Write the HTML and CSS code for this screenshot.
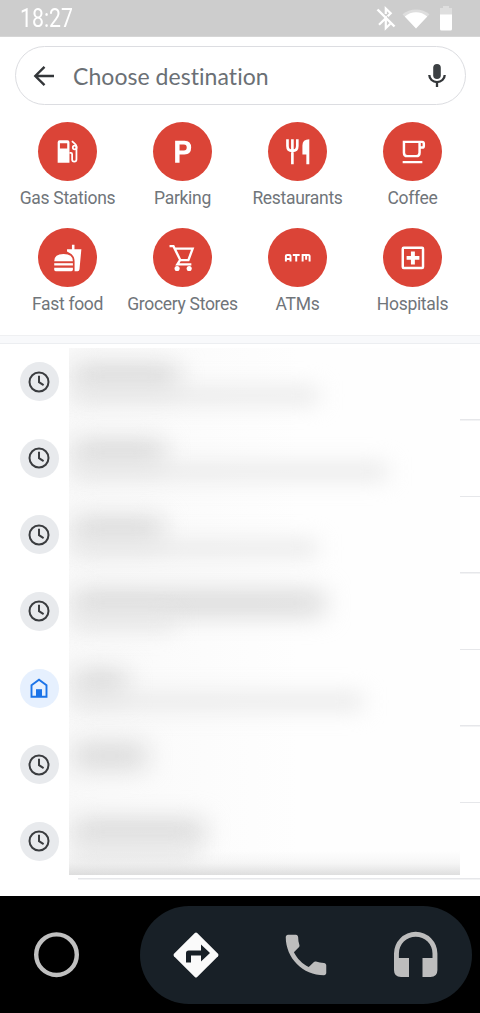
FILE: index.html
```html
<!DOCTYPE html>
<html lang="en">
<head>
<meta charset="utf-8">
<title>Choose destination</title>
<link rel="stylesheet" href="styles.css">
</head>
<body>
<div class="screen">
  <header class="status">
    <span class="time">18:27</span>
    <div class="status-icons">
      <svg class="bt" width="20" height="25" viewBox="0 0 20 25"><path d="M1.500 3.500 18.500 20.500" stroke="#fff" stroke-width="2.400"/><path d="M9.800 8V2.600l4.900 4.700-3 3M3 18.800l6.800-6.600v10l4.500-4.500" fill="none" stroke="#fff" stroke-width="2.200"/></svg>
      <svg class="wifi" width="28" height="20" viewBox="0 0 28 20"><path d="M14 19.500.5 5.200C8-1.200 20-1.200 27.500 5.200Z" fill="#dedede"/><path d="M14 19.500 2.800 7.600C9 1.700 19 1.700 25.200 7.600Z" fill="#fff"/></svg>
      <svg class="battery" width="14" height="25" viewBox="0 0 14 25"><path d="M4 0h6v2H13v7H1V2h3Z" fill="#dedede"/><path d="M1 8.500h12V23q0 1.500-1.500 1.500h-9Q1 24.500 1 23Z" fill="#fff"/></svg>
    </div>
  </header>

  <div class="search">
    <svg width="22" height="22" viewBox="0 0 22 22" fill="none" stroke="#333639" stroke-width="2.400"><path d="M21 11H3M11.500 1.800 2.300 11l9.200 9.200"/></svg>
    <span class="placeholder">Choose destination</span>
    <svg width="18" height="25" viewBox="0 0 18 25"><rect x="5.200" y="1" width="7.600" height="15" rx="3.800" fill="#3c4043"/><path d="M1.300 12a7.700 7.100 0 0 0 15.400 0M9 19v5" fill="none" stroke="#333639" stroke-width="2.300"/></svg>
  </div>

  <nav class="categories">
    <div class="category"><div class="disc"><svg viewBox="0 0 60 60"><path fill-rule="evenodd" d="M22 18.500h8q2 0 2 2V41.500H20v-21q0-2 2-2Zm.3 3v5.500h7.400v-5.500Z" fill="#fff"/><path d="M32 31.500h1.500q1.200 0 1.200 1.200v5.500q0 2.100 2.200 2.100t2.200-2.100V25q0-1.500-1.200-2.500L34.500 19.500" fill="none" stroke="#fff" stroke-width="1.800"/><circle cx="37.300" cy="26" r="1.900" fill="none" stroke="#fff" stroke-width="1.800"/></svg></div><span class="label">Gas Stations</span></div>
    <div class="category"><div class="disc"><svg viewBox="0 0 60 60"><path fill-rule="evenodd" d="M22.500 19H32q6.800 0 6.800 7T32 33h-5v8.500h-4.500ZM27 23v6h4.500q2.800 0 2.800-3t-2.800-3Z" fill="#fff"/></svg></div><span class="label">Parking</span></div>
    <div class="category"><div class="disc"><svg viewBox="0 0 60 60"><path d="M19.800 17.500v7q0 5 5 5t5-5v-7M24.800 17.500V43" fill="none" stroke="#fff" stroke-width="2.700"/><path d="M42 17.500V43h-3V33h-4v-9q0-6.500 7-6.500Z" fill="#fff"/></svg></div><span class="label">Restaurants</span></div>
    <div class="category"><div class="disc"><svg viewBox="0 0 60 60"><path d="M21.300 20.200h15.900v11q0 3.500-3.500 3.500h-8.900q-3.500 0-3.500-3.500ZM37.200 20.200h2.600q1.700 0 1.700 1.700v2.400q0 1.700-1.700 1.700h-2.600M20 40.800h20" fill="none" stroke="#fff" stroke-width="2.500"/></svg></div><span class="label">Coffee</span></div>
    <div class="category"><div class="disc"><svg viewBox="0 0 60 60"><g fill="#fff"><path d="M16.500 33.800q0-7.300 9.500-7.300t9.500 7.300Z"/><rect x="16.500" y="35.800" width="19" height="2.300"/><path d="M16.500 40.500h19v1.800q0 1.600-1.600 1.600H18q-1.500 0-1.500-1.600Z"/><path d="M34.500 17h2.600v4.500h7L42.200 42q-.2 1.900-2 1.900h-3V34q0-6-5-8.500L29.500 24v-2.500h5Z"/></g></svg></div><span class="label">Fast food</span></div>
    <div class="category"><div class="disc"><svg viewBox="0 0 60 60"><path d="M16.800 18.500h4l7 14.200h8.200L40.300 21H22M27.800 32.200l-3 4.800H39" fill="none" stroke="#fff" stroke-width="2.400"/><circle cx="24.500" cy="41.200" r="2.600" fill="#fff"/><circle cx="36.800" cy="41.200" r="2.600" fill="#fff"/></svg></div><span class="label">Grocery Stores</span></div>
    <div class="category"><div class="disc"><svg viewBox="0 0 60 60"><path d="M18.200 34v-5.400q0-1.200 1.200-1.200h2.300q1.200 0 1.200 1.200V34M18.200 31.500h4.700M25.200 27.400h7M28.700 27.400V34M35.200 34v-6.600h5.900q1.200 0 1.200 1.200V34M38.800 27.400v4.800" fill="none" stroke="#fff" stroke-width="2"/></svg></div><span class="label">ATMs</span></div>
    <div class="category"><div class="disc"><svg viewBox="0 0 60 60"><rect x="20.100" y="20.100" width="20.600" height="20.600" rx="1" fill="none" stroke="#fff" stroke-width="2.500"/><path d="M30.400 24v13M24 30.400h13" stroke="#fff" stroke-width="4"/></svg></div><span class="label">Hospitals</span></div>
  </nav>

  <div class="divider"></div>

  <main class="history">
    <svg class="defs" width="0" height="0"><symbol id="clock" viewBox="0 0 22 22"><circle cx="11" cy="11" r="9.500" fill="none" stroke="#3a3c3f" stroke-width="2"/><path d="M11 4.700v6.500l4.600 2.900" fill="none" stroke="#3a3c3f" stroke-width="2"/></symbol></svg>
    <div class="entry"><div class="badge"><svg width="22" height="22"><use href="#clock"/></svg></div></div>
    <div class="entry"><div class="badge"><svg width="22" height="22"><use href="#clock"/></svg></div></div>
    <div class="entry"><div class="badge"><svg width="22" height="22"><use href="#clock"/></svg></div></div>
    <div class="entry"><div class="badge"><svg width="22" height="22"><use href="#clock"/></svg></div></div>
    <div class="entry"><div class="badge home"><svg width="22" height="22" viewBox="0 0 22 22"><path d="M3.500 8.200 11 2.700l7.500 5.500v11.500h-15Z" fill="none" stroke="#1a73e8" stroke-width="1.900"/><path d="M8 12.200h6v7.500H8Z" fill="#1a73e8"/></svg></div></div>
    <div class="entry"><div class="badge"><svg width="22" height="22"><use href="#clock"/></svg></div></div>
    <div class="entry"><div class="badge"><svg width="22" height="22"><use href="#clock"/></svg></div></div>
    <div class="veil">
      <div class="veil-row"><i class="title" style="width:104px"></i><i class="sub" style="width:244px"></i></div>
      <div class="veil-row"><i class="title" style="width:90px"></i><i class="sub" style="width:313px"></i></div>
      <div class="veil-row"><i class="title" style="width:88px"></i><i class="sub" style="width:243px"></i></div>
      <div class="veil-row high"><i class="title" style="width:250px"></i><i class="sub" style="width:100px"></i></div>
      <div class="veil-row"><i class="title" style="width:52px"></i><i class="sub" style="width:288px"></i></div>
      <div class="veil-row high"><i class="title" style="width:72px"></i></div>
      <div class="veil-row high"><i class="title" style="width:130px"></i><i class="sub" style="width:120px"></i></div>
    </div>
  </main>

  <footer class="dock">
    <svg class="home-button" width="46" height="46" viewBox="0 0 46 46"><circle cx="22.500" cy="22.700" r="20.300" fill="none" stroke="#c0c0c0" stroke-width="4.400"/></svg>
    <div class="pill">
      <svg width="46" height="46" viewBox="0 0 46 46"><path d="M21.800 1q1.200-1 2.400 0L45 21.800q1 1.200 0 2.400L24.200 45q-1.200 1-2.400 0L1 24.200q-1-1.200 0-2.400Z" fill="#fafafa"/><path d="M13 30.500v-9.300q0-2.700 2.700-2.700H28v-6l9 8.500-9 8.500v-6H18v7Z" fill="#182027"/></svg>
      <svg class="phone" width="54" height="54" viewBox="0 0 24 24"><path d="M6.620 10.790c1.440 2.830 3.760 5.140 6.590 6.590l2.200-2.200c.27-.27.670-.36 1.020-.24 1.120.37 2.330.57 3.570.57.550 0 1 .45 1 1V20c0 .55-.45 1-1 1-9.390 0-17-7.610-17-17 0-.55.450-1 1-1h3.500c.550 0 1 .45 1 1 0 1.250.2 2.450.57 3.570.11.350.03.740-.25 1.020l-2.200 2.200z" fill="#bdbdbd"/></svg>
      <svg class="phones" width="46" height="47" viewBox="0 0 46 47"><path d="M1 22.500a21.700 21.700 0 0 1 43.400 0V39q0 7-7 7H29.500V27h10v-4.500a16.800 16.800 0 0 0-33.600 0V27H16v19H8q-7 0-7-7Z" fill="#bdbdbd"/></svg>
    </div>
  </footer>
</div>
</body>
</html>
```
FILE: styles.css
```css
* { box-sizing: border-box; }
body { margin: 0; background: #fff; font-family: Roboto, "Liberation Sans", sans-serif; }
svg { display: block; flex: none; }

.screen { width: 480px; height: 1013px; display: flex; flex-direction: column; overflow: hidden; }

.status { height: 37px; flex: none; background: #cdcdcd; display: flex; justify-content: space-between; padding: 0 27px 0 20px; border-bottom: 1px solid #d6d6d6; }
.time { color: #fff; font-size: 25px; line-height: 37px; transform: scaleX(.85); transform-origin: left; }
.status-icons { display: flex; align-items: flex-start; padding-top: 6px; }
.wifi { margin: 3px 0 0 6px; }
.battery { margin-left: 9px; }

.search { height: 59px; flex: none; margin: 9px 14.500px 0; border: 1.500px solid #dcdde1; border-radius: 30px; display: flex; align-items: center; padding: 0 19px 0 17.500px; }
.placeholder { flex: 1; margin-left: 18px; font-family: Lato, Roboto, sans-serif; font-size: 23px; letter-spacing: .05px; color: #6b7075; white-space: nowrap; }

.categories { flex: none; height: 230px; padding: 17px 10px 0 10px; display: grid; grid-template-columns: repeat(4, 1fr); grid-template-rows: 106px 106px; }
.category { display: flex; flex-direction: column; align-items: center; }
.disc { width: 59px; height: 59px; border-radius: 50%; background: #db4437; }
.disc svg { width: 59px; height: 59px; }
.label { margin-top: 6px; font-size: 17.500px; line-height: 23px; letter-spacing: -.3px; color: #70757a; white-space: nowrap; }

.divider { flex: none; height: 9px; background: #f8f9fb; border-top: 1px solid #eff0f2; border-bottom: 1px solid #eceef1; }

.history { position: relative; flex: none; height: 552px; padding-bottom: 16px; display: grid; grid-template-rows: repeat(7, 1fr); }
.defs { position: absolute; }
.entry { display: flex; align-items: center; padding: 0 0 1px 19.500px; background: linear-gradient(#e6e7ea, #e6e7ea) 78px 100% / 402px 1.500px no-repeat; }
.badge { width: 39px; height: 39px; border-radius: 50%; background: #e8eaed; display: flex; align-items: center; justify-content: center; }
.badge.home { background: #e6f0fe; }

.veil { position: absolute; left: 69px; top: 4px; width: 391px; height: 527px; overflow: hidden; background: linear-gradient(90deg, #f9f9f9, #fbfbfb 90px, #fefefe 230px); }
.veil::after { content: ""; position: absolute; inset: auto 0 0; height: 24px; background: linear-gradient(rgba(215,215,215,0), rgba(215,215,215,.2) 50%, rgba(212,212,212,.75)); }
.veil-row { height: 76.400px; padding: 18px 0 0 5px; display: flex; flex-direction: column; }
.veil-row.high { padding-top: 15px; }
.title { height: 22px; background: #d4d4d4; filter: blur(13px); }
.sub { height: 15px; background: #e6e6e6; filter: blur(11px); }

.dock { flex: none; height: 117px; background: #000; display: flex; align-items: center; padding: 0 8px 0 34px; }
.pill { margin-left: 59.500px; width: 333px; height: 98px; border-radius: 49px; background: #182027; display: flex; align-items: center; padding-left: 33.500px; }
.phone { margin-left: 60px; }
.phones { margin-left: 60px; }
```
